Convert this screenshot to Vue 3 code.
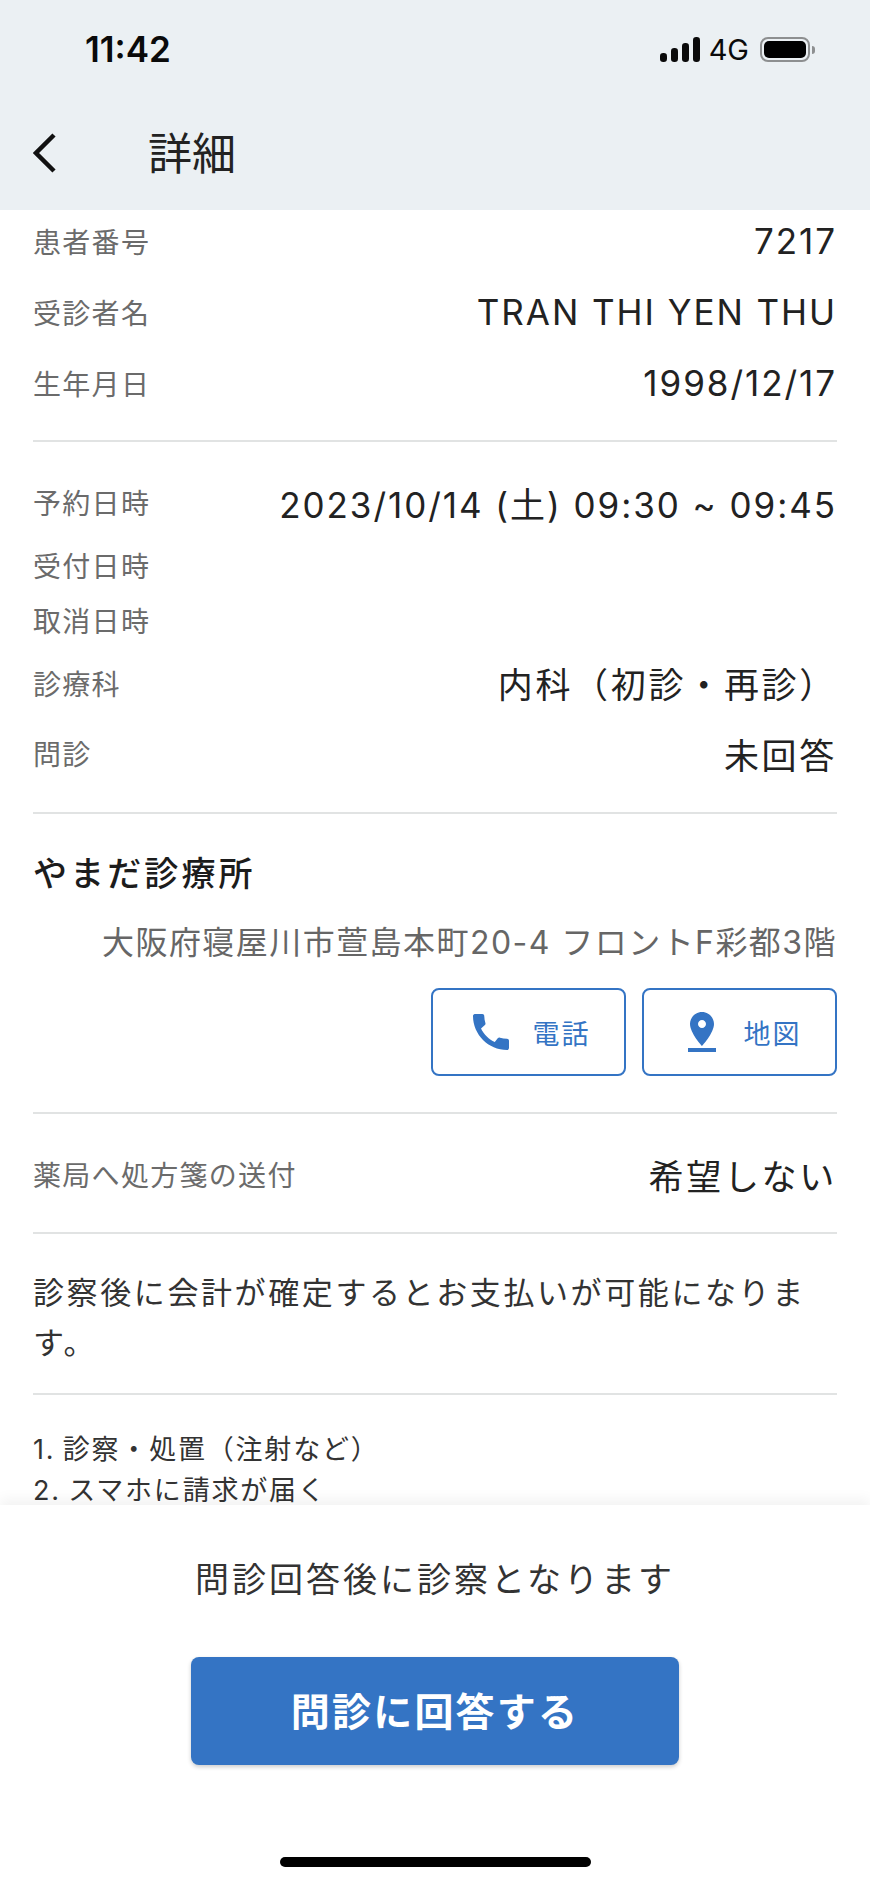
<script setup>
const patientRows = [
  { label: '患者番号', value: '7217' },
  { label: '受診者名', value: 'TRAN THI YEN THU' },
  { label: '生年月日', value: '1998/12/17' }
]

const bookingRows = [
  { label: '予約日時', value: '2023/10/14 (土) 09:30 ~ 09:45', size: 'h70' },
  { label: '受付日時', value: '', size: 'h55' },
  { label: '取消日時', value: '', size: 'h55' },
  { label: '診療科', value: '内科（初診・再診）', size: 'h71', jp: true },
  { label: '問診', value: '未回答', size: 'h70', jp: true }
]
</script>

<template>
  <div class="screen">
    <header class="topbar">
      <div class="status">
        <span class="time">11:42</span>
        <div class="status-right">
          <svg class="signal" viewBox="0 0 40 25" width="40" height="25">
            <rect x="0" y="16" width="7" height="9" rx="3.2" />
            <rect x="11" y="11" width="7" height="14" rx="3.2" />
            <rect x="22" y="6" width="7" height="19" rx="3.2" />
            <rect x="33" y="0" width="7" height="25" rx="3.2" />
          </svg>
          <span class="net">4G</span>
          <div class="battery"><div class="battery-fill"></div></div>
          <div class="battery-cap"></div>
        </div>
      </div>
      <div class="nav">
        <svg class="back" viewBox="0 0 24 40" width="24" height="40">
          <polyline points="21,2 3,20 21,38" fill="none" stroke="#111" stroke-width="4.5" />
        </svg>
        <h1 class="title">詳細</h1>
      </div>
    </header>

    <main class="scroll">
      <div class="content">
        <section class="group patient">
          <div v-for="row in patientRows" :key="row.label" class="row h71">
            <span class="label">{{ row.label }}</span>
            <span class="value">{{ row.value }}</span>
          </div>
        </section>

        <section class="group booking">
          <div v-for="row in bookingRows" :key="row.label" class="row" :class="row.size">
            <span class="label">{{ row.label }}</span>
            <span class="value" :class="{ jp: row.jp }">{{ row.value }}</span>
          </div>
        </section>

        <section class="group clinic">
          <h2 class="clinic-name">やまだ診療所</h2>
          <p class="address">大阪府寝屋川市萱島本町20-4 フロントF彩都3階</p>
          <div class="actions">
            <button class="outline">
              <svg viewBox="0 0 24 24" width="48" height="48">
                <path d="M20.01 15.38c-1.23 0-2.42-.2-3.53-.56-.35-.12-.74-.03-1.01.24l-1.57 1.97c-2.83-1.35-5.48-3.9-6.89-6.83l1.95-1.66c.27-.28.35-.67.24-1.02-.37-1.11-.56-2.3-.56-3.53 0-.54-.45-.99-.99-.99H4.19C3.65 3 3 3.24 3 3.99 3 13.28 10.73 21 20.01 21c.71 0 .99-.63.99-1.18v-3.45c0-.54-.45-.99-.99-.99z" />
              </svg>
              <span>電話</span>
            </button>
            <button class="outline">
              <svg viewBox="0 0 24 24" width="48" height="48">
                <path d="M18 8c0-3.31-2.69-6-6-6S6 4.69 6 8c0 4.5 6 11 6 11s6-6.5 6-11zm-8 0c0-1.1.9-2 2-2s2 .9 2 2-.89 2-2 2c-1.1 0-2-.9-2-2zM5 20v2h14v-2H5z" />
              </svg>
              <span>地図</span>
            </button>
          </div>
        </section>

        <section class="group pharmacy">
          <div class="row h60">
            <span class="label">薬局へ処方箋の送付</span>
            <span class="value jp">希望しない</span>
          </div>
        </section>

        <section class="group notice">
          <p>診察後に会計が確定するとお支払いが可能になります。</p>
        </section>

        <ol class="steps">
          <li>1. 診察・処置（注射など）</li>
          <li>2. スマホに請求が届く</li>
        </ol>
      </div>
    </main>

    <footer class="footer">
      <p class="hint">問診回答後に診察となります</p>
      <button class="primary">問診に回答する</button>
      <div class="home-bar"></div>
    </footer>
  </div>
</template>

<style>
html, body {
  margin: 0;
  background: #fff;
}
</style>

<style scoped>
.screen {
  width: 870px;
  height: 1883px;
  display: flex;
  flex-direction: column;
  overflow: hidden;
  background: #fff;
  color: #222;
  font-family: Inter, "Noto Sans CJK JP", sans-serif;
}

/* top bar */
.topbar {
  height: 210px;
  flex: none;
  background: #ebf0f3;
  position: relative;
  z-index: 2;
}
.status {
  height: 100px;
  display: flex;
  justify-content: space-between;
  align-items: flex-start;
  padding: 30px 55px 0 85px;
  box-sizing: border-box;
}
.time {
  font-family: Inter, sans-serif;
  font-size: 35px;
  font-weight: 600;
  line-height: 39px;
  color: #0a0a0a;
}
.status-right {
  display: flex;
  align-items: center;
  height: 25px;
  margin-top: 7px;
}
.signal {
  fill: #0a0a0a;
  margin-right: 9px;
}
.net {
  font-family: Inter, sans-serif;
  font-size: 29px;
  line-height: 25px;
  color: #0a0a0a;
  margin-right: 11px;
}
.battery {
  width: 50px;
  height: 25px;
  border: 2px solid #8d8f90;
  border-radius: 8px;
  box-sizing: border-box;
  padding: 2px;
}
.battery-fill {
  width: 100%;
  height: 100%;
  background: #000;
  border-radius: 5px;
}
.battery-cap {
  width: 3px;
  height: 8px;
  margin-left: 2px;
  background: #8d8f90;
  border-radius: 0 3px 3px 0;
}
.nav {
  display: flex;
  align-items: center;
  height: 106px;
  padding-left: 33px;
}
.title {
  margin: -4px 0 0 91px;
  font-family: "Noto Sans CJK JP", sans-serif;
  font-size: 44px;
  font-weight: 400;
  color: #222;
}

/* scrolling body */
.scroll {
  flex: 1;
  min-height: 0;
}
.content {
  margin-top: -5px;
  padding: 0 33px;
}
.group {
  border-bottom: 2px solid #e1e3e3;
}
.patient {
  padding-bottom: 22px;
}
.booking {
  padding: 25px 0 24px;
}
.row {
  display: flex;
  justify-content: space-between;
  align-items: center;
}
.h55 { height: 55px; }
.h60 { height: 60px; }
.h70 { height: 70px; }
.h71 { height: 71px; }
.label {
  font-family: "Noto Sans CJK JP", sans-serif;
  font-size: 28px;
  letter-spacing: 1.3px;
  color: #6b6b6b;
}
.value {
  font-size: 35px;
  letter-spacing: 1.95px;
  color: #222;
}
.value.jp {
  letter-spacing: 2.7px;
}
.clinic {
  padding: 33px 0 36px;
}
.clinic-name {
  margin: 0;
  font-family: "Noto Sans CJK JP", sans-serif;
  font-size: 34px;
  line-height: 50px;
  font-weight: 500;
  letter-spacing: 3.1px;
  color: #1c1c1c;
}
.address {
  margin: 24px 0 0;
  text-align: right;
  font-size: 32px;
  line-height: 44px;
  letter-spacing: 1.45px;
  color: #666;
}
.actions {
  display: flex;
  justify-content: flex-end;
  gap: 16px;
  margin-top: 23px;
}
.outline {
  width: 195px;
  height: 88px;
  display: flex;
  align-items: center;
  justify-content: center;
  gap: 18px;
  background: #fff;
  border: 2px solid #3474c4;
  border-radius: 8px;
  padding: 0;
  color: #3474c4;
  font-family: "Noto Sans CJK JP", sans-serif;
  font-size: 27px;
  letter-spacing: 2px;
}
.outline svg {
  fill: #3474c4;
}
.pharmacy {
  padding: 30px 0 28px;
}
.notice {
  padding: 32px 0 27px;
}
.notice p {
  margin: 0;
  font-family: "Noto Sans CJK JP", sans-serif;
  font-size: 31px;
  line-height: 50px;
  letter-spacing: 2.6px;
  color: #333;
}
.steps {
  list-style: none;
  margin: 0;
  padding: 41px 0 0;
  display: flex;
  flex-direction: column;
  gap: 13px;
  font-size: 27px;
  line-height: 28px;
  letter-spacing: 1.8px;
  word-spacing: -2px;
  color: #333;
}

/* fixed bottom area */
.footer {
  height: 378px;
  flex: none;
  background: #fff;
  position: relative;
  display: flex;
  flex-direction: column;
  align-items: center;
  box-shadow: 0 -6px 12px rgba(0, 0, 0, 0.05);
}
.hint {
  margin: 50px 0 0;
  font-family: "Noto Sans CJK JP", sans-serif;
  font-size: 34px;
  line-height: 46px;
  letter-spacing: 3px;
  color: #333;
}
.primary {
  margin-top: 56px;
  padding: 0 0 4px;
  width: 488px;
  height: 108px;
  border: none;
  border-radius: 8px;
  background: #3474c4;
  box-shadow: 0 2px 4px rgba(0, 0, 0, 0.2);
  color: #fff;
  font-family: "Noto Sans CJK JP", sans-serif;
  font-size: 39px;
  font-weight: 700;
  letter-spacing: 2.2px;
}
.home-bar {
  width: 311px;
  height: 10px;
  border-radius: 5px;
  background: #000;
  margin-top: 92px;
}
</style>
